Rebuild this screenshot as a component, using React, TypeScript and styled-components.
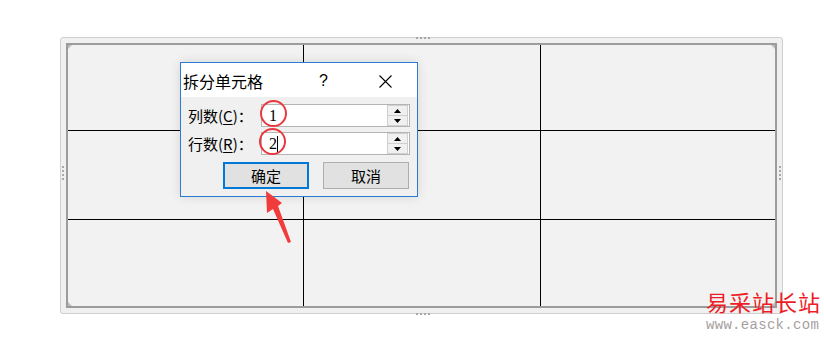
import { createGlobalStyle, styled } from "styled-components";

const GlobalStyle = createGlobalStyle`
  html, body {
    margin: 0;
    padding: 0;
    background: #ffffff;
  }

  body {
    font-family: "Noto Sans CJK SC", "Noto Sans", sans-serif;
    color: #000;
  }
`;

const cells = Array.from({ length: 9 }, (_, i) => i);

const rows = [
  { label: "列数", key: "C", value: "1", caret: false },
  { label: "行数", key: "R", value: "2", caret: true },
];

const App = () => {
  return (
    <>
      <GlobalStyle />
      <Page>
        <Frame>
          <Handle $side="top" />
          <Handle $side="bottom" />
          <Handle $side="left" />
          <Handle $side="right" />
          <Corner $at="tl" />
          <Corner $at="tr" />
          <Corner $at="bl" />
          <Corner $at="br" />
          <Table>
            {cells.map((i) => (
              <Cell key={i} $lastCol={i % 3 === 2} $lastRow={i >= 6} />
            ))}
          </Table>
        </Frame>

        <Dialog>
          <TitleBar>
            <Title>拆分单元格</Title>
            <Help>?</Help>
            <Close>
              <svg width="13" height="13" viewBox="0 0 13 13">
                <path d="M0.5 0.5 L12.5 12.5 M12.5 0.5 L0.5 12.5" stroke="#000" strokeWidth="1.1" fill="none" />
              </svg>
            </Close>
          </TitleBar>
          <DialogBody>
            {rows.map((row) => (
              <FieldRow key={row.key}>
                <FieldLabel>
                  {row.label}(<u>{row.key}</u>)：
                </FieldLabel>
                <SpinInput>
                  <InputText>
                    {row.value}
                    {row.caret && <Caret />}
                  </InputText>
                  <Spinner>
                    <SpinButton>
                      <svg width="7" height="4" viewBox="0 0 7 4">
                        <path d="M0 4 L3.5 0 L7 4 Z" fill="#000" />
                      </svg>
                    </SpinButton>
                    <SpinButton>
                      <svg width="7" height="4" viewBox="0 0 7 4">
                        <path d="M0 0 L3.5 4 L7 0 Z" fill="#000" />
                      </svg>
                    </SpinButton>
                  </Spinner>
                </SpinInput>
              </FieldRow>
            ))}
            <ButtonRow>
              <DialogButton $primary>确定</DialogButton>
              <DialogButton>取消</DialogButton>
            </ButtonRow>
          </DialogBody>
        </Dialog>

        <Ring style={{ left: 260, top: 100 }} />
        <Ring style={{ left: 259, top: 128 }} />

        <Arrow width="824" height="345" viewBox="0 0 824 345">
          <path d="M266 191 L282 203 L278 206 L291 242 L288 243 L273 209 L267 213 Z" fill="#f23b3b" />
        </Arrow>

        <Watermark>
          <WatermarkTitle>易采站长站</WatermarkTitle>
          <WatermarkUrl>www.easck.com</WatermarkUrl>
        </Watermark>
      </Page>
    </>
  );
};

export default App;

const Page = styled.div`
  position: relative;
  width: 824px;
  height: 345px;
  padding: 37px 0 0 60px;
  box-sizing: border-box;
  overflow: hidden;
`;

const Frame = styled.div`
  position: relative;
  width: 723px;
  height: 277px;
  box-sizing: border-box;
  padding: 5px;
  border: 1px solid #cfcfcf;
  border-radius: 3px;
  background: #f0f0f0;
`;

const Handle = styled.div<{ $side: "top" | "bottom" | "left" | "right" }>`
  position: absolute;
  display: flex;
  flex-direction: ${({ $side }) => ($side === "left" || $side === "right" ? "column" : "row")};
  gap: 2px;
  ${({ $side }) =>
    $side === "top"
      ? "top: -1px; left: 355px;"
      : $side === "bottom"
      ? "bottom: -2px; left: 355px;"
      : $side === "left"
      ? "left: 1px; top: 128px;"
      : "right: 1px; top: 128px;"}

  &::before,
  &::after {
    content: "";
    width: 2px;
    height: 2px;
    background: #a8a8a8;
    box-shadow: ${({ $side }) =>
      $side === "left" || $side === "right" ? "0 4px 0 #a8a8a8" : "4px 0 0 #a8a8a8"};
    margin-${({ $side }) => ($side === "left" || $side === "right" ? "bottom" : "right")}: 4px;
  }
`;

const Corner = styled.div<{ $at: "tl" | "tr" | "bl" | "br" }>`
  position: absolute;
  width: 0;
  height: 0;
  ${({ $at }) =>
    $at === "tl"
      ? "top: 6px; left: 6px; border-top: 6px solid #9a9a9a; border-right: 6px solid transparent;"
      : $at === "tr"
      ? "top: 6px; right: 6px; border-top: 6px solid #9a9a9a; border-left: 6px solid transparent;"
      : $at === "bl"
      ? "bottom: 6px; left: 6px; border-bottom: 6px solid #9a9a9a; border-right: 6px solid transparent;"
      : "bottom: 6px; right: 6px; border-bottom: 6px solid #9a9a9a; border-left: 6px solid transparent;"}
  opacity: 0.6;
`;

const Table = styled.div`
  width: 100%;
  height: 100%;
  box-sizing: border-box;
  display: grid;
  grid-template-columns: 236px 237px 1fr;
  grid-template-rows: 86px 89px 1fr;
  border: 2px solid #9c9c9c;
  background: #f2f2f2;
`;

const Cell = styled.div<{ $lastCol: boolean; $lastRow: boolean }>`
  border-right: ${({ $lastCol }) => ($lastCol ? "none" : "1px solid #000")};
  border-bottom: ${({ $lastRow }) => ($lastRow ? "none" : "1px solid #000")};
`;

const Dialog = styled.div`
  position: absolute;
  left: 180px;
  top: 62px;
  width: 238px;
  height: 135px;
  box-sizing: border-box;
  border: 1px solid #2b7bd6;
  background: #f0f0f0;
  display: flex;
  flex-direction: column;
  box-shadow: 0 0 10px rgba(0, 0, 0, 0.12);
`;

const TitleBar = styled.div`
  height: 34px;
  background: #ffffff;
  display: flex;
  align-items: center;
  padding: 0 0 0 2px;
`;

const Title = styled.span`
  font-size: 16px;
  line-height: 1;
  width: 136px;
  padding-top: 2px;
`;

const Help = styled.span`
  font-family: "Liberation Sans", sans-serif;
  font-size: 16px;
  width: 60px;
  padding-top: 2px;
`;

const Close = styled.span`
  display: flex;
  align-items: center;
  padding-top: 2px;
`;

const DialogBody = styled.div`
  flex: 1;
  display: flex;
  flex-direction: column;
  padding: 7px 7px 0 7px;
  gap: 5px;
`;

const FieldRow = styled.div`
  display: flex;
  align-items: center;
  height: 23px;
`;

const FieldLabel = styled.span`
  width: 73px;
  font-size: 15px;
  white-space: nowrap;

  u {
    text-decoration-thickness: 1px;
    text-underline-offset: 2px;
  }
`;

const SpinInput = styled.div`
  flex: 1;
  height: 23px;
  box-sizing: border-box;
  border: 1px solid #b4b4b4;
  background: #ffffff;
  display: flex;
  align-items: center;
  justify-content: space-between;
  padding: 0 1px 0 7px;
`;

const InputText = styled.span`
  display: flex;
  align-items: center;
  font-family: "Liberation Serif", "Noto Sans CJK SC", serif;
  font-size: 16px;
`;

const Caret = styled.span`
  display: inline-block;
  width: 1px;
  height: 16px;
  background: #000;
`;

const Spinner = styled.div`
  display: flex;
  flex-direction: column;
  width: 21px;
  height: 21px;
  border: 1px solid #cfcfcf;
  box-sizing: border-box;
`;

const SpinButton = styled.div`
  flex: 1;
  display: flex;
  align-items: center;
  justify-content: center;
  background: #f0f0f0;

  & + & {
    border-top: 1px solid #cfcfcf;
  }
`;

const ButtonRow = styled.div`
  display: flex;
  justify-content: flex-end;
  gap: 14px;
  margin-top: 2px;
  padding-right: 1px;
`;

const DialogButton = styled.div<{ $primary?: boolean }>`
  width: 86px;
  height: 27px;
  box-sizing: border-box;
  display: flex;
  align-items: center;
  justify-content: center;
  font-size: 15px;
  background: #e1e1e1;
  border: ${({ $primary }) => ($primary ? "2px solid #0078d7" : "1px solid #adadad")};
`;

const Ring = styled.div`
  position: absolute;
  width: 27px;
  height: 27px;
  box-sizing: border-box;
  border: 2.5px solid #e9383f;
  border-radius: 50%;
`;

const Arrow = styled.svg`
  position: absolute;
  left: 0;
  top: 0;
  pointer-events: none;
`;

const Watermark = styled.div`
  position: absolute;
  left: 706px;
  top: 289px;
  display: flex;
  flex-direction: column;
  gap: 5px;
`;

const WatermarkTitle = styled.span`
  font-family: "Noto Sans CJK SC", sans-serif;
  font-size: 22px;
  line-height: 24px;
  letter-spacing: 1px;
  color: #ee1c25;
`;

const WatermarkUrl = styled.span`
  font-family: "Liberation Mono", monospace;
  font-size: 14px;
  line-height: 14px;
  letter-spacing: 0.3px;
  color: #a79f9f;
`;
